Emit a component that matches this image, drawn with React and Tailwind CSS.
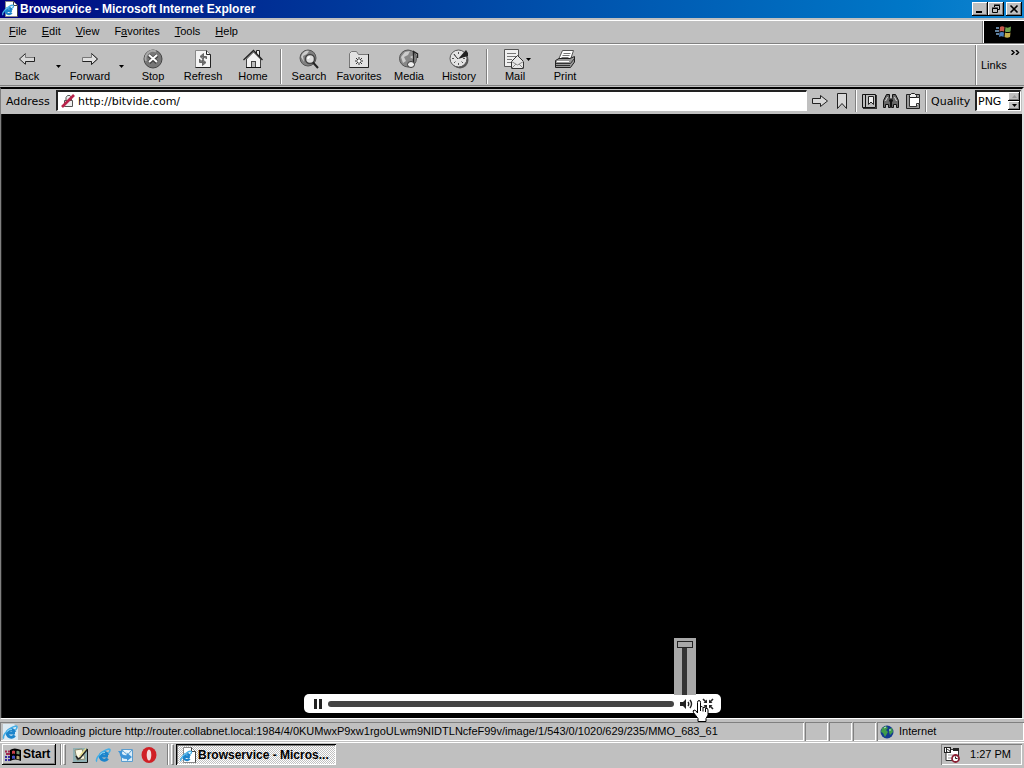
import React from "react";

const RAISED = "bg-[#c0c0c0] shadow-[inset_-1px_-1px_0_#000,inset_1px_1px_0_#fff,inset_-2px_-2px_0_#808080]";
const SUNKEN = "shadow-[inset_1px_1px_0_#808080,inset_-1px_-1px_0_#fff]";

function Svg({ w = 20, h = 20, className = "", children }) {
  return (
    <svg width={w} height={h} viewBox={`0 0 ${w} ${h}`} className={`shrink-0 ${className}`} aria-hidden="true">
      {children}
    </svg>
  );
}

function IeGlyph() {
  return (
    <g fill="none">
      <path d="M13 9H5M12.600 11.400A4 3.800 0 1 1 12.900 8" stroke="#1b84cc" strokeWidth="3" />
      <path d="M2 14.500C0 13 4 7 9 4C12 2 15 1.500 15 3C15 4 14.500 5 13.500 6" stroke="#45aee6" strokeWidth="1.600" />
      <path d="M5 7.500Q7 5 10 5.500" stroke="#8fd4f5" />
    </g>
  );
}

function IeIcon() {
  return (
    <Svg w={16} h={16}>
      <IeGlyph />
    </Svg>
  );
}

function PageIcon() {
  return (
    <Svg w={16} h={16}>
      <path d="M3.500.5H11.500L15.500 4.500V15.500H3.500Z" fill="#fff" stroke="#888" />
      <path d="M11.500.5V4.500H15.500V15.500" fill="none" stroke="#444" />
      <g transform="translate(-.5 2.500) scale(.8)">
        <IeGlyph />
      </g>
    </Svg>
  );
}

function BackIcon() {
  return (
    <Svg>
      <path d="M8.500 4.500L2.500 10L8.500 15.500V12.500H17.500V8.500H8.500Z" fill="#d8d8d8" />
      <path d="M8.500 4.500L2.500 10L8.500 15.500M17.500 8V12.500H8.500V15" fill="none" stroke="#222" />
      <path d="M8.500 5V8.500H17" fill="none" stroke="#777" />
    </Svg>
  );
}

function ForwardIcon() {
  return (
    <Svg>
      <path d="M11.500 4.500L17.500 10L11.500 15.500V12.500H2.500V8.500H11.500Z" fill="#e0e0e0" stroke="#777" />
      <path d="M11.500 4.500L17.500 10L11.500 15.500V12.500H2.500" fill="none" stroke="#222" />
    </Svg>
  );
}

function StopIcon() {
  return (
    <Svg>
      <circle cx="10" cy="10" r="9" fill="#777" stroke="#444" />
      <path d="M3 12A7.500 7.500 0 0 1 13 2.500" fill="none" stroke="#aaa" strokeWidth="2" />
      <path d="M6 6.500L14 13.500M14 6.500L6 13.500" stroke="#444" strokeWidth="4" />
      <path d="M6 6L14 13M14 6L6 13" stroke="#fff" strokeWidth="2" />
    </Svg>
  );
}

function RefreshIcon() {
  return (
    <Svg>
      <path d="M2.500 1.500H13.500L17.500 5.500V18.500H2.500Z" fill="#f4f4f4" stroke="#888" />
      <path d="M13.500 1.500V5.500H17.500V18.500H2.500" fill="none" stroke="#222" />
      <path d="M13.500 10V7.500H8M10.500 4.500V10.500L7 7.500ZM6.500 10V13.500H12M9.500 10.500V16.500L13 13.500Z" fill="#777" stroke="#666" />
    </Svg>
  );
}

function HomeIcon() {
  return (
    <Svg>
      <path d="M13.500 5V1.500H16.500V8" fill="#eee" stroke="#222" />
      <path d="M3.500 10V18.500H17.500V10L10.500 3Z" fill="#f2f2f2" stroke="#444" />
      <path d="M.5 11L10.500 1.500L19.500 11" fill="none" stroke="#222" strokeWidth="1.300" />
      <rect x="8.500" y="12.500" width="4" height="6" fill="#bbb" stroke="#444" />
      <path d="M3 18.500H18" stroke="#111" />
    </Svg>
  );
}

function SearchIcon() {
  return (
    <Svg>
      <circle cx="9" cy="9" r="8" fill="#808080" stroke="#555" />
      <path d="M2 8C4 2 8 1 10 2L8 5L4 7L5 13Z" fill="#ccc" />
      <circle cx="11" cy="10" r="4.500" fill="#ddd" stroke="#444" strokeWidth="1.500" />
      <path d="M14 13.500L19 19" stroke="#222" strokeWidth="2" />
      <path d="M9 10A2 2 0 0 1 11 8" fill="none" stroke="#fff" strokeWidth="1.500" />
    </Svg>
  );
}

function FavoritesIcon() {
  return (
    <Svg>
      <path d="M.5 18.500V4.500L2.500 2.500H7.500L9.500 5.500H19.500V18.500Z" fill="#e2e2e2" stroke="#777" />
      <path d="M19.500 5V18.500H.5" fill="none" stroke="#222" />
      <path d="M10 8V16M6 12H14M7 9L13 15M13 9L7 15" stroke="#333" />
      <circle cx="10" cy="12" r="1.500" fill="#fff" />
    </Svg>
  );
}

function MediaIcon() {
  return (
    <Svg>
      <circle cx="9" cy="9.500" r="8.500" fill="#888" stroke="#555" />
      <path d="M2 8L6 3L11 2L9 6L5 8L7 12L4 14ZM11 8L15 6L14 10Z" fill="#ccc" />
      <path d="M14.500 15V2.500L18.500 5V9" fill="none" stroke="#222" strokeWidth="1.400" />
      <ellipse cx="12" cy="15.500" rx="3.500" ry="3" fill="#eee" stroke="#333" />
    </Svg>
  );
}

function HistoryIcon() {
  return (
    <Svg>
      <circle cx="11" cy="11" r="8.500" fill="#555" />
      <circle cx="9.500" cy="9.500" r="8.500" fill="#e4e4e4" stroke="#555" />
      <path d="M9.500 3V5M9.500 14V16M3 9.500H5M14 9.500H16M5 5L6.500 6.500M5 14L6.500 12.500M14 14L12.500 12.500" stroke="#555" />
      <path d="M9 10L17 1L19 4V7Z" fill="#222" />
      <path d="M9 10L5 5.500" stroke="#333" />
    </Svg>
  );
}

function MailIcon() {
  return (
    <Svg>
      <path d="M.5.5H14.500V17.500H.5Z" fill="#f0f0f0" stroke="#555" />
      <path d="M3 4.500H12M3 7.500H12M3 10.500H8M3 13.500H7" stroke="#777" />
      <path d="M7.500 12.500L13.500 6.500L19.500 12.500V19.500H7.500Z" fill="#e6e6e6" stroke="#333" />
      <path d="M7.500 12.500L13.500 16L19.500 12.500M7.500 19.500L12 15M19.500 19.500L15 15" fill="none" stroke="#888" />
    </Svg>
  );
}

function PrintIcon() {
  return (
    <Svg>
      <path d="M3.500 10.500L7.500 1.500H18.500L15.500 10.500Z" fill="#fff" stroke="#555" />
      <path d="M8.500 4.500H15.500M7.500 6.500H14.500M6.500 8.500H13.500" stroke="#777" />
      <path d="M.5 11.500L4 9.500H15L19.500 7.500V13L15.500 18.500H.5Z" fill="#999" stroke="#222" />
      <path d="M1 14.500H15.500L19 10M1 16.500H15" fill="none" stroke="#333" />
      <path d="M2 12.500H14" stroke="#fff" />
    </Svg>
  );
}

function SmallArrow() {
  return (
    <Svg w={5} h={3}>
      <path d="M0 0H5L2.500 3Z" fill="#000" />
    </Svg>
  );
}

function ToolButton({ label, icon, menu }) {
  return (
    <button type="button" className="flex w-[50px] flex-col items-center">
      <span className="flex items-center">
        {icon}
        {menu && (
          <span className="-mr-1 pl-[2px]">
            <SmallArrow />
          </span>
        )}
      </span>
      <span className="mt-px leading-[13px]">{label}</span>
    </button>
  );
}

function MenuArrow({ label }) {
  return (
    <button type="button" aria-label={label} className="flex w-[13px] items-center justify-center">
      <SmallArrow />
    </button>
  );
}

function Divider({ className = "" }) {
  return <span className={`w-[2px] shrink-0 self-stretch border-l border-r border-l-[#808080] border-r-white ${className}`} />;
}

function Grip() {
  return <span className="w-[3px] shrink-0 self-stretch border border-t-white border-l-white border-r-[#808080] border-b-[#808080]" />;
}

function TitleBar() {
  const btn = `flex h-[14px] w-4 items-center justify-center ${RAISED}`;
  return (
    <header className="flex h-[18px] items-center bg-linear-to-r from-[#000080] to-[#1084d0] pl-[2px] pr-[2px] text-white">
      <PageIcon />
      <h1 className="ml-[2px] grow text-[12px] leading-[16px] font-bold">Browservice - Microsoft Internet Explorer</h1>
      <button type="button" aria-label="Minimize" className={btn}>
        <Svg w={10} h={10}><path d="M1 7H7V9H1Z" /></Svg>
      </button>
      <button type="button" aria-label="Restore" className={btn}>
        <Svg w={10} h={10}>
          <path d="M3.500 3V1.500H8.500V5.500H7M3 1H9M1.500 4.500H6.500V8.500H1.500ZM1 4H7" fill="none" stroke="#000" />
        </Svg>
      </button>
      <button type="button" aria-label="Close" className={`ml-[2px] ${btn}`}>
        <Svg w={10} h={10}><path d="M1.500 1.500L8.500 8.500M8.500 1.500L1.500 8.500" stroke="#000" strokeWidth="1.600" /></Svg>
      </button>
    </header>
  );
}

const MENUS = [
  ["", "F", "ile"],
  ["", "E", "dit"],
  ["", "V", "iew"],
  ["F", "a", "vorites"],
  ["", "T", "ools"],
  ["", "H", "elp"],
];

function MenuBar() {
  return (
    <div className="mt-[2px] flex h-6 border-t border-b border-t-white border-b-[#808080]">
      <nav className="flex grow items-center gap-[15px] pb-px pl-[9px]">
        {MENUS.map(([a, b, c]) => (
          <button type="button" key={b}>
            {a}
            <u>{b}</u>
            {c}
          </button>
        ))}
      </nav>
      <Divider />
      <div className="flex w-10 items-center justify-center bg-black">
        <Svg w={18} h={18}>
          <path d="M5 4Q7 2.500 9.500 4L9 8.500Q7 7.500 4.500 8.500Z" fill="#c8584c" />
          <path d="M10.500 4Q13 5.500 16 3.500L15.500 8.500Q12.500 9.500 10 8.500Z" fill="#6ca04b" />
          <path d="M4.500 9.500Q7 8.500 9 9.500L8.500 14Q6.500 12.500 4 14Z" fill="#4c81bf" />
          <path d="M10 9.500Q12.500 10.500 15.500 9.500L15 14Q12 15.500 9.500 14Z" fill="#c8af4a" />
          <path d="M1 5H4M0 8H4M1 11H4" stroke="#7fa9d0" strokeWidth="1.500" />
        </Svg>
      </div>
    </div>
  );
}

function ToolBar() {
  return (
    <div className="flex h-[42px] border-t border-b border-t-white border-b-[#808080] pl-[2px]">
      <div className="flex grow pt-1 pb-px" role="toolbar" aria-label="Standard buttons">
        <ToolButton label="Back" icon={<BackIcon />} />
        <MenuArrow label="Back history" />
        <ToolButton label="Forward" icon={<ForwardIcon />} />
        <MenuArrow label="Forward history" />
        <ToolButton label="Stop" icon={<StopIcon />} />
        <ToolButton label="Refresh" icon={<RefreshIcon />} />
        <ToolButton label="Home" icon={<HomeIcon />} />
        <Divider className="mx-[2px]" />
        <ToolButton label="Search" icon={<SearchIcon />} />
        <ToolButton label="Favorites" icon={<FavoritesIcon />} />
        <ToolButton label="Media" icon={<MediaIcon />} />
        <ToolButton label="History" icon={<HistoryIcon />} />
        <Divider className="mx-[2px]" />
        <ToolButton label="Mail" icon={<MailIcon />} menu />
        <ToolButton label="Print" icon={<PrintIcon />} />
      </div>
      <Divider />
      <div className="flex w-[47px] flex-col pl-1">
        <button type="button" aria-label="More links" className="mt-[5px] mr-1 self-end">
          <Svg w={9} h={5}><path d="M.5 0L3 2.500L.5 5M5 0L7.500 2.500L5 5" fill="none" stroke="#000" strokeWidth="1.500" /></Svg>
        </button>
        <span className="mt-1 leading-[13px]">Links</span>
      </div>
    </div>
  );
}

function IconButton({ label, children }) {
  return (
    <button type="button" aria-label={label} className="flex w-[22px] items-center justify-center pb-[2px]">
      {children}
    </button>
  );
}

function AddressBar() {
  const spin = `flex h-[9px] w-3 items-center justify-center ${RAISED}`;
  return (
    <form className="flex h-[25px] items-stretch bg-[#c0c0c0] pt-px pl-[5px] font-['DejaVu_Sans',sans-serif]" onSubmit={(e) => e.preventDefault()}>
      <label htmlFor="address" className="w-[50px] self-center pb-[2px]">Address</label>
      <div className="mb-[3px] flex grow items-center border-t-2 border-l-2 border-r border-b border-t-[#222] border-l-[#222] border-r-white border-b-white bg-white pl-[3px]">
        <Svg w={14} h={14}>
          <path d="M3.500 6.500H11.500V12.500H3.500ZM5 6V3.500L6.500 1.500H9L10.500 3.500V6" fill="#eee" stroke="#555" />
          <path d="M1 13L13 1" stroke="#b8224a" strokeWidth="2.600" />
        </Svg>
        <input id="address" type="text" defaultValue="http://bitvide.com/" className="ml-[3px] min-w-0 grow bg-transparent outline-none" />
      </div>
      <div className="flex w-12 pl-[2px]">
        <IconButton label="Go">
          <Svg w={16} h={16}><path d="M.5 5.500H8.500V2.500L15.500 8L8.500 13.500V10.500H.5Z" fill="#d8d8d8" stroke="#222" /></Svg>
        </IconButton>
        <IconButton label="Bookmark">
          <Svg w={16} h={16}><path d="M3.500.5H12.500V15.500L8 10.500L3.500 15.500Z" fill="#d8d8d8" stroke="#222" /></Svg>
        </IconButton>
      </div>
      <Divider className="mb-[2px]" />
      <div className="flex w-[68px] justify-center">
        <IconButton label="Bookmarks">
          <Svg w={16} h={16}>
            <path d="M1.500 1.500H14.500V14.500H1.500ZM4.500 1V15" fill="#bbb" stroke="#111" />
            <path d="M2 15.500H16M15.500 2V16" stroke="#333" />
            <path d="M7.500 3.500H12.500V11.500L10 9L7.500 11.500Z" fill="#eee" stroke="#222" />
          </Svg>
        </IconButton>
        <IconButton label="Find">
          <Svg w={16} h={16}>
            <path d="M3.500 1.500H6.500V4.500L7.500 6.500V14.500H5.500V11.500H2.500V14.500H.5V7.500ZM12.500 1.500H9.500V4.500L8.500 6.500V14.500H10.500V11.500H13.500V14.500H15.500V7.500Z" fill="#666" stroke="#111" />
            <path d="M4.500 4L2.500 8M11.500 4L13.500 8" stroke="#ddd" />
            <path d="M6 7.500H10" stroke="#111" strokeWidth="2" />
          </Svg>
        </IconButton>
        <IconButton label="Clipboard">
          <Svg w={16} h={16}>
            <path d="M1.500 1.500H14.500V15.500H1.500Z" fill="#999" stroke="#222" />
            <path d="M4.500 4.500H14.500V10.500L11.500 13.500H4.500Z" fill="#fff" stroke="#333" />
            <path d="M11.500 13.500V10.500H14.500" fill="#ddd" stroke="#333" />
            <path d="M4.500 4.500V2.500L6.500.5H9.500L11.500 2.500V4.500Z" fill="#eee" stroke="#222" />
          </Svg>
        </IconButton>
      </div>
      <Divider className="mb-[2px]" />
      <label htmlFor="quality" className="ml-1 w-11 self-center pb-[2px]">Quality</label>
      <div className="mr-px mb-[3px] flex w-[46px] items-center border-t-2 border-l-2 border-r border-b border-t-[#222] border-l-[#222] border-r-white border-b-white bg-white">
        <select id="quality" className="w-[31px] appearance-none bg-transparent pl-px outline-none">
          <option>PNG</option>
        </select>
        <div className="flex flex-col">
          <button type="button" aria-label="Higher quality" disabled className={spin}>
            <Svg w={5} h={3}><path d="M0 3H5L2.500 0Z" fill="#999" /></Svg>
          </button>
          <button type="button" aria-label="Lower quality" className={spin}>
            <SmallArrow />
          </button>
        </div>
      </div>
    </form>
  );
}

function Player() {
  return (
    <div className="flex h-[19px] w-[417px] items-center rounded-[5px] bg-white pr-[7px] pl-[10px]">
      <button type="button" aria-label="Pause" className="w-[14px]">
        <Svg w={8} h={10}><path d="M0 0H3V10H0ZM5 0H8V10H5Z" fill="#222" /></Svg>
      </button>
      <input
        type="range"
        aria-label="Position"
        defaultValue="0"
        className="h-[6px] min-w-0 grow appearance-none rounded-full bg-[#444] [&::-webkit-slider-thumb]:h-[6px] [&::-webkit-slider-thumb]:w-0 [&::-webkit-slider-thumb]:appearance-none"
      />
      <div className="relative ml-[6px] w-[14px]">
        <button type="button" aria-label="Mute" className="block">
          <Svg w={13} h={10}>
            <path d="M0 3H3L6 0V10L3 7H0Z" fill="#222" />
            <path d="M8 3Q9.500 5 8 7M10 1Q13 5 10 9" fill="none" stroke="#222" strokeWidth="1.400" />
          </Svg>
        </button>
        <div className="absolute bottom-[14px] -left-[6px] flex h-[57px] w-[22px] justify-center bg-[#a8a8a8] pt-[3px]">
          <input
            type="range"
            aria-label="Volume"
            defaultValue="100"
            className="h-[54px] w-4 appearance-none bg-[linear-gradient(#333,#333)] bg-[length:5px_100%] bg-center bg-no-repeat [direction:rtl] [writing-mode:vertical-lr] [&::-webkit-slider-thumb]:h-[7px] [&::-webkit-slider-thumb]:w-4 [&::-webkit-slider-thumb]:appearance-none [&::-webkit-slider-thumb]:border [&::-webkit-slider-thumb]:border-[#222] [&::-webkit-slider-thumb]:bg-[#a8a8a8]"
          />
        </div>
      </div>
      <div className="relative ml-2">
        <button type="button" aria-label="Exit full screen" className="block">
          <Svg w={12} h={12}>
            <path d="M1 1L4 4M11 1L8 4M1 11L4 8M11 11L8 8" stroke="#222" strokeWidth="1.600" />
            <path d="M5 1.500V5H1.500ZM7 1.500V5H10.500ZM5 10.500V7H1.500ZM7 10.500V7H10.500Z" fill="#222" />
          </Svg>
        </button>
        <Svg w={17} h={22} className="absolute top-[2px] -left-[10px] z-10">
          <path
            d="M5.500 13V2.500Q5.500.5 7 .5Q8.500.5 8.500 2.500V7Q10 5.500 11 7.500Q12.500 6.500 13.500 8.500Q16 7.500 16 10V15L14 18.500V21.500H6V18.500L1.500 12.500Q.5 10.500 2 10Q4 10 5.500 13Z"
            fill="#fff"
            stroke="#000"
          />
          <path d="M8.500 7V11M11 7.500V11.500M13.500 8.500V12" stroke="#000" />
        </Svg>
      </div>
    </div>
  );
}

function StatusBar() {
  return (
    <footer className="flex h-[19px] gap-px">
      <div className={`flex min-w-0 grow items-center gap-1 pl-[2px] ${SUNKEN}`}>
        <Svg w={16} h={16}>
          <path d="M1 0H12L16 4V16H1Z" fill="#dceaf3" />
          <IeGlyph />
        </Svg>
        <p className="truncate">
          Downloading picture http://router.collabnet.local:1984/4/0KUMwxP9xw1rgoULwm9NIDTLNcfeF99v/image/1/543/0/1020/629/235/MMO_683_61
        </p>
      </div>
      <div className={`w-[23px] ${SUNKEN}`} />
      <div className={`w-[23px] ${SUNKEN}`} />
      <div className={`w-[23px] ${SUNKEN}`} />
      <div className={`flex w-[147px] items-center gap-[5px] pl-[3px] ${SUNKEN}`}>
        <Svg w={14} h={14}>
          <circle cx="7" cy="7" r="6.500" fill="#143a91" />
          <path d="M2 3L6 1L8 3L6 5L8 7L5 12L3 8L1 7ZM9 4L12 3L13 7L10 10L9 7Z" fill="#3f9b4b" />
          <path d="M4 3L6 2M9 5L11 5" stroke="#bfe6d2" />
        </Svg>
        <span>Internet</span>
      </div>
    </footer>
  );
}

function TaskBar() {
  return (
    <div className="flex h-[26px] items-stretch border-t border-white px-[2px] pt-px pb-[3px]">
      <button type="button" className={`flex w-[54px] items-center gap-[1px] pl-[3px] text-[12px] font-bold ${RAISED}`}>
        <Svg w={17} h={16}>
          <path d="M5 3Q9 0 16 3V14Q10 11 5 14Z" fill="#000" />
          <path d="M7 4Q8.500 3 10 4V7Q8.500 6 7 7Z" fill="#c84048" />
          <path d="M11.500 4Q13 3.500 14.500 4.500V7.500Q13 7 11.500 7Z" fill="#709070" />
          <path d="M7 9Q8.500 8 10 9V12Q8.500 11 7 12Z" fill="#4850c0" />
          <path d="M11.500 9Q13 8.500 14.500 9.500V12.500Q13 12 11.500 12Z" fill="#b0a070" />
          <path d="M0 4.500H2M3 4.500H5M1 7H5" stroke="#a02850" strokeWidth="2" />
          <path d="M0 10H2M3 10H5M0 13H2M3 13H5" stroke="#3828a0" strokeWidth="2" />
        </Svg>
        Start
      </button>
      <div className="ml-1 flex gap-[6px]">
        <div className="flex gap-px"><Divider /><Grip /></div>
        <div className="flex items-center gap-[7px]">
          <button type="button" aria-label="Show desktop">
            <Svg w={16} h={16}>
              <path d="M1 1H15V15H1Z" fill="#8fb0b4" />
              <path d="M.5 15.500H15.500V2" fill="none" stroke="#111" />
              <path d="M3 3L10 2L13 12L5 13Z" fill="#fbf9e4" stroke="#8a8a70" />
              <path d="M4 9L6 12L8 11L15.500 2" fill="none" stroke="#222" strokeWidth="1.600" />
              <path d="M7.500 9.500L14 1.500" stroke="#e4d98a" strokeWidth="1.500" />
            </Svg>
          </button>
          <button type="button" aria-label="Internet Explorer"><IeIcon /></button>
          <button type="button" aria-label="Outlook Express">
            <Svg w={16} h={16}>
              <path d="M3.500 2.500H14.500V14.500H3.500Z" fill="#dceefa" stroke="#5a9dcf" />
              <path d="M4 3L9.500 8L14 3" fill="none" stroke="#5a9dcf" />
              <path d="M0 4H5L3.500 6Q5 9 9 8V6L14 10L9 14V12Q2 12 1.500 6Z" fill="#3e94d8" />
              <path d="M6 4Q9 3 11 5" fill="none" stroke="#fff" />
            </Svg>
          </button>
          <button type="button" aria-label="Opera">
            <Svg w={16} h={16}>
              <ellipse cx="8" cy="8" rx="7.500" ry="8" fill="#d02026" />
              <ellipse cx="8" cy="8" rx="2.300" ry="5.500" fill="#f3dcdc" />
            </Svg>
          </button>
        </div>
        <div className="ml-1 flex gap-[2px]"><Divider /><Grip /></div>
      </div>
      <button
        type="button"
        className="ml-[2px] flex w-40 items-center gap-[2px] bg-[repeating-conic-gradient(#fff_0_25%,#c0c0c0_0_50%)] bg-[length:2px_2px] pt-px pl-1 text-[12px] font-bold shadow-[inset_1px_1px_0_#000,inset_-1px_-1px_0_#fff,inset_2px_2px_0_#808080]"
      >
        <PageIcon />
        Browservice - Micros...
      </button>
      <div className={`ml-auto flex w-[81px] items-center justify-between pr-[11px] pl-[3px] ${SUNKEN}`}>
        <Svg w={16} h={16}>
          <path d="M2 2.500H14.500V13.500H2Z" fill="#fff" stroke="#333" />
          <path d="M0 0H7V6H0ZM9 1H15V4H9Z" fill="#222" />
          <path d="M1.500 1V5M3 1.500H5.500V3H3.500V4.500H5.500" fill="none" stroke="#fff" />
          <path d="M4 8H9M4 11H7" stroke="#999" />
          <circle cx="11.500" cy="11.500" r="3.500" fill="#fff" stroke="#8b2034" strokeWidth="1.800" />
          <path d="M11.500 9.500V11.500H13.500" fill="none" stroke="#222" />
        </Svg>
        <time>1:27 PM</time>
      </div>
    </div>
  );
}

export default function App() {
  return (
    <div className="flex h-screen flex-col overflow-hidden bg-[#c0c0c0] font-['Liberation_Sans',Arial,sans-serif] text-[11px] leading-[13px] text-black">
      <TitleBar />
      <MenuBar />
      <ToolBar />
      <main className="mt-px flex min-h-0 grow flex-col border-t-2 border-r-2 border-b border-l border-t-black border-r-[#dfdfdf] border-b-white border-l-[#808080]">
        <AddressBar />
        <section className="flex min-h-0 grow items-end justify-center border-l border-[#222] bg-black pb-[5px]">
          <Player />
        </section>
      </main>
      <div className="h-[3px]" />
      <StatusBar />
      <div className="h-px" />
      <TaskBar />
    </div>
  );
}
